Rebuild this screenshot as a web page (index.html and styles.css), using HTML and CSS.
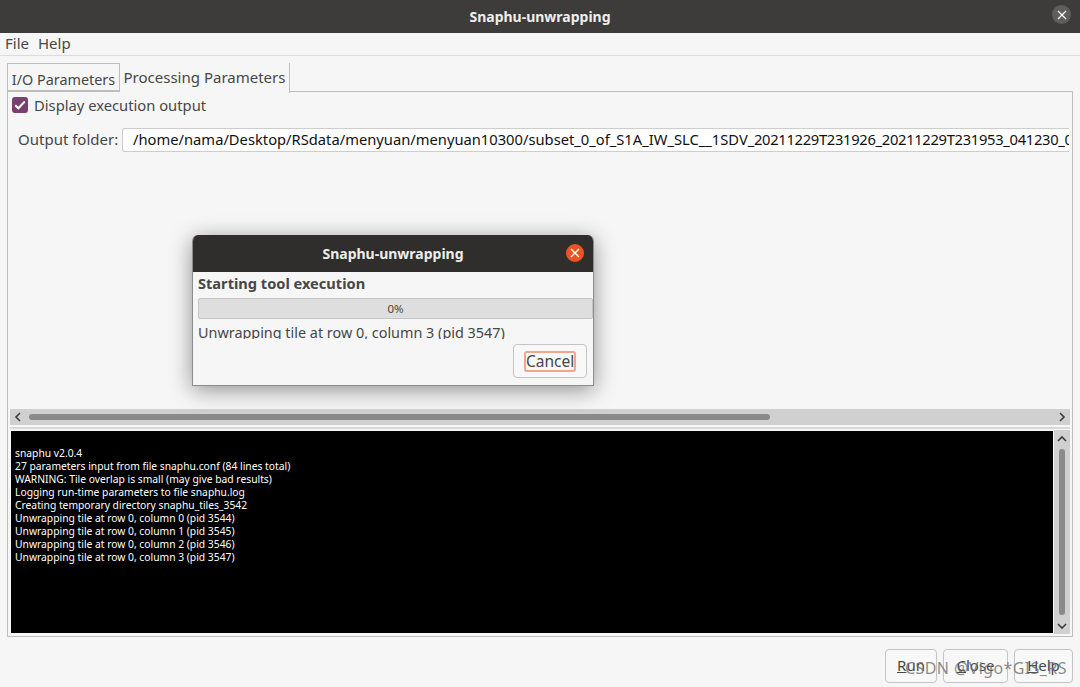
FILE: index.html
```html
<!DOCTYPE html>
<html lang="en">
<head>
<meta charset="utf-8">
<title>Snaphu-unwrapping</title>
<link rel="stylesheet" href="styles.css">
</head>
<body>
<div class="window">
  <header class="titlebar">
    <span class="title">Snaphu-unwrapping</span>
    <span class="win-close">
      <svg width="10" height="10" viewBox="0 0 10 10"><path d="M1 1L9 9M9 1L1 9" stroke="#fff" stroke-width="1.3" fill="none"/></svg>
    </span>
  </header>
  <nav class="menubar"><span>File</span><span>Help</span></nav>
  <div class="tabs">
    <span class="tab inactive">I/O Parameters</span>
    <span class="tab active">Processing Parameters</span>
  </div>
  <main class="panel">
    <label class="check-row">
      <span class="checkbox">
        <svg width="12" height="10" viewBox="0 0 12 10"><path d="M1.2 5.2L4.4 8.3L10.8 1.5" stroke="#fff" stroke-width="2" fill="none"/></svg>
      </span>
      Display execution output
    </label>
    <div class="folder-row">
      <span class="folder-label">Output folder:</span>
      <div class="folder-input">/home/nama/Desktop/RSdata/menyuan/menyuan10300/subset_0_of_S1A_IW_SLC__1SDV<span class="digits">_20211229T231926_20211229T231953_041230_0</span></div>
    </div>
    <div class="spacer"></div>
    <div class="hscroll">
      <svg class="arrow" width="8" height="10" viewBox="0 0 8 10"><path d="M6 1L2 5L6 9" stroke="#3c3c3c" stroke-width="1.6" fill="none"/></svg>
      <div class="htrack"><div class="hthumb"></div></div>
      <svg class="arrow" width="8" height="10" viewBox="0 0 8 10"><path d="M2 1L6 5L2 9" stroke="#3c3c3c" stroke-width="1.6" fill="none"/></svg>
    </div>
    <div class="console-wrap">
      <pre class="console">
snaphu v2.0.4
27 parameters input from file snaphu.conf (84 lines total)
WARNING: Tile overlap is small (may give bad results)
Logging run-time parameters to file snaphu.log
Creating temporary directory snaphu_tiles_3542
Unwrapping tile at row 0, column 0 (pid 3544)
Unwrapping tile at row 0, column 1 (pid 3545)
Unwrapping tile at row 0, column 2 (pid 3546)
Unwrapping tile at row 0, column 3 (pid 3547)</pre>
      <div class="vscroll">
        <svg width="10" height="8" viewBox="0 0 10 8"><path d="M1 6L5 2L9 6" stroke="#3c3c3c" stroke-width="1.6" fill="none"/></svg>
        <div class="vthumb"></div>
        <svg width="10" height="8" viewBox="0 0 10 8"><path d="M1 2L5 6L9 2" stroke="#3c3c3c" stroke-width="1.6" fill="none"/></svg>
      </div>
    </div>
  </main>
  <footer class="actions">
    <button class="btn btn-run"><u>R</u>un</button>
    <button class="btn btn-close"><u>C</u>lose</button>
    <button class="btn btn-help"><u>H</u>elp</button>
  </footer>
  <div class="dialog">
    <div class="dlg-title">
      <span>Snaphu-unwrapping</span>
      <span class="dlg-close">
        <svg width="10" height="10" viewBox="0 0 10 10"><path d="M1 1L9 9M9 1L1 9" stroke="#fff" stroke-width="1.4" fill="none"/></svg>
      </span>
    </div>
    <div class="dlg-body">
      <div class="dlg-head">Starting tool execution</div>
      <div class="progress">0%</div>
      <div class="dlg-msg">Unwrapping tile at row 0, column 3 (pid 3547)</div>
      <div class="dlg-actions">
        <button class="btn-cancel"><span>Cancel</span></button>
      </div>
    </div>
  </div>
  <div class="watermark">CSDN @Vigo*GIS_RS</div>
</div>
</body>
</html>
```
FILE: styles.css
```css
* { box-sizing: border-box; }
html, body { margin: 0; padding: 0; }
body {
  width: 1080px;
  height: 687px;
  overflow: hidden;
  background: #f6f6f6;
  font-family: "Noto Sans", sans-serif;
  color: #474747;
}
.window {
  position: relative;
  width: 1080px;
  height: 687px;
  display: flex;
  flex-direction: column;
}
.titlebar {
  height: 33px;
  flex: none;
  background: #3d3c3a;
  display: flex;
  align-items: center;
  justify-content: center;
  position: relative;
}
.title {
  color: #eeeeec;
  font-weight: 700;
  font-size: 14px;
}
.win-close {
  position: absolute;
  right: 9px;
  top: 5px;
  width: 19px;
  height: 19px;
  border-radius: 50%;
  background: #5e5d5c;
  display: flex;
  align-items: center;
  justify-content: center;
}
.menubar {
  height: 23px;
  flex: none;
  border-bottom: 1px solid #dcdcdc;
  display: flex;
  gap: 9px;
  align-items: center;
  padding: 0 0 2px 5px;
  font-size: 15px;
}
.tabs {
  height: 36px;
  flex: none;
  display: flex;
  align-items: flex-end;
  padding-left: 7px;
  font-size: 15px;
  position: relative;
  z-index: 1;
  margin-bottom: -1px;
}
.tab {
  display: flex;
  align-items: center;
  justify-content: center;
  white-space: nowrap;
}
.tab.inactive {
  width: 113px;
  height: 29px;
  border: 1px solid #bdbdbd;
  border-bottom: 2px solid #bdbdbd;
  padding-top: 5px;
  font-size: 14.4px;
}
.tab.active {
  width: 170px;
  height: 30px;
  border-right: 1px solid #bdbdbd;
  background: #f6f6f6;
  padding-bottom: 2px;
  margin-bottom: -1px;
}
.panel {
  flex: none;
  height: 546px;
  margin: 0 7px;
  border: 1px solid #bdbdbd;
  display: flex;
  flex-direction: column;
  min-width: 0;
}
.check-row {
  display: flex;
  align-items: center;
  gap: 6px;
  height: 29px;
  padding: 0 0 3px 4px;
  font-size: 14.75px;
  flex: none;
}
.checkbox {
  width: 16px;
  height: 16px;
  border-radius: 3px;
  background: #77406f;
  display: flex;
  align-items: center;
  justify-content: center;
}
.folder-row {
  display: flex;
  align-items: center;
  margin-top: 7px;
  height: 24px;
  padding-left: 10px;
  flex: none;
  font-size: 15px;
}
.folder-label {
  width: 104px;
  flex: none;
  white-space: nowrap;
  padding-bottom: 2px;
}
.folder-input {
  flex: 1;
  min-width: 0;
  height: 24px;
  margin-right: 3px;
  border: 1px solid #cdcdcd;
  border-right: none;
  border-radius: 3px 0 0 3px;
  background: #fff;
  color: #111;
  padding: 0 0 0 10px;
  line-height: 20px;
  font-size: 14.72px;
  white-space: nowrap;
  overflow: hidden;
}
.digits { letter-spacing: -0.3px; }
.spacer { flex: 1; }
.hscroll {
  flex: none;
  height: 16px;
  background: #d0d0d0;
  margin: 0 2px;
  display: flex;
  align-items: center;
  padding: 0 4px;
  gap: 7px;
}
.arrow { flex: none; }
.htrack { flex: 1; height: 6px; }
.hthumb {
  width: 741px;
  height: 6px;
  border-radius: 3px;
  background: #8a8a8a;
}
.console-wrap {
  flex: none;
  height: 207px;
  margin: 2px 2px 2px 2px;
  padding-top: 1px;
  border-top: 2px solid #d8d8d8;
  display: flex;
}
.console {
  flex: 1;
  margin: 1px 0 1px 1px;
  background: #000;
  color: #fff;
  font-family: "Noto Sans", sans-serif;
  font-size: 10.3px;
  line-height: 13px;
  padding: 16px 0 0 4px;
  white-space: pre;
  overflow: hidden;
}
.vscroll {
  width: 16px;
  flex: none;
  background: #d0d0d0;
  margin-left: 1px;
  display: flex;
  flex-direction: column;
  align-items: center;
  padding: 5px 0 4px;
  gap: 6px;
}
.vthumb {
  flex: 1;
  width: 6px;
  border-radius: 3px;
  background: #8a8a8a;
  margin-bottom: 1px;
}
.actions {
  flex: 1;
  display: flex;
  justify-content: flex-end;
  gap: 6px;
  padding: 12px 7px 5px 0;
}
.btn {
  height: 34px;
  border: 1px solid #c4c4c4;
  border-radius: 4px;
  background: #f8f8f8;
  font: 15px "Noto Sans", sans-serif;
  color: #474747;
  padding: 0 0 3px;
}
.btn-run { width: 52px; }
.btn-close { width: 65px; }
.btn-help { width: 59px; }
.watermark {
  position: absolute;
  left: 905px;
  top: 657px;
  font-size: 16px;
  letter-spacing: 0.4px;
  color: rgba(110,110,110,0.8);
  white-space: nowrap;
}
.dialog {
  position: absolute;
  left: 192px;
  top: 235px;
  width: 402px;
  height: 151px;
  background: #f6f6f6;
  border-radius: 6px 6px 0 0;
  border: 1px solid #8c8c8c;
  border-top: none;
  box-shadow: 0 4px 22px rgba(0,0,0,0.42);
  display: flex;
  flex-direction: column;
  overflow: hidden;
}
.dlg-title {
  height: 37px;
  flex: none;
  background: #302e2d;
  color: #eeeeec;
  font-weight: 700;
  font-size: 14px;
  display: flex;
  align-items: center;
  justify-content: center;
  position: relative;
}
.dlg-close {
  position: absolute;
  right: 9px;
  top: 9px;
  width: 18px;
  height: 18px;
  border-radius: 50%;
  background: #e95420;
  display: flex;
  align-items: center;
  justify-content: center;
}
.dlg-body {
  flex: 1;
  display: flex;
  flex-direction: column;
  padding-left: 5px;
}
.dlg-head {
  font-weight: 700;
  font-size: 14.6px;
  height: 26px;
  line-height: 23px;
  white-space: nowrap;
}
.progress {
  height: 21px;
  background: #dedede;
  border: 1px solid #c4c4c4;
  border-radius: 2px;
  text-align: center;
  font-size: 11.5px;
  line-height: 19px;
}
.dlg-msg {
  height: 20px;
  font-size: 14.4px;
  line-height: 27px;
  overflow: hidden;
  white-space: nowrap;
  flex: none;
}
.dlg-actions {
  display: flex;
  justify-content: flex-end;
  padding: 5px 6px 0 0;
}
.btn-cancel {
  width: 74px;
  height: 34px;
  border: 1px solid #c4c4c4;
  border-radius: 4px;
  background: #f8f8f8;
  display: flex;
  align-items: center;
  justify-content: center;
  padding: 0;
  font: 15.5px "Noto Sans", sans-serif;
  color: #474747;
}
.btn-cancel span {
  display: block;
  width: 52px;
  height: 21px;
  line-height: 17px;
  border: 2px solid #f0a58f;
  border-radius: 3px;
  white-space: nowrap;
  overflow: hidden;
}
```
